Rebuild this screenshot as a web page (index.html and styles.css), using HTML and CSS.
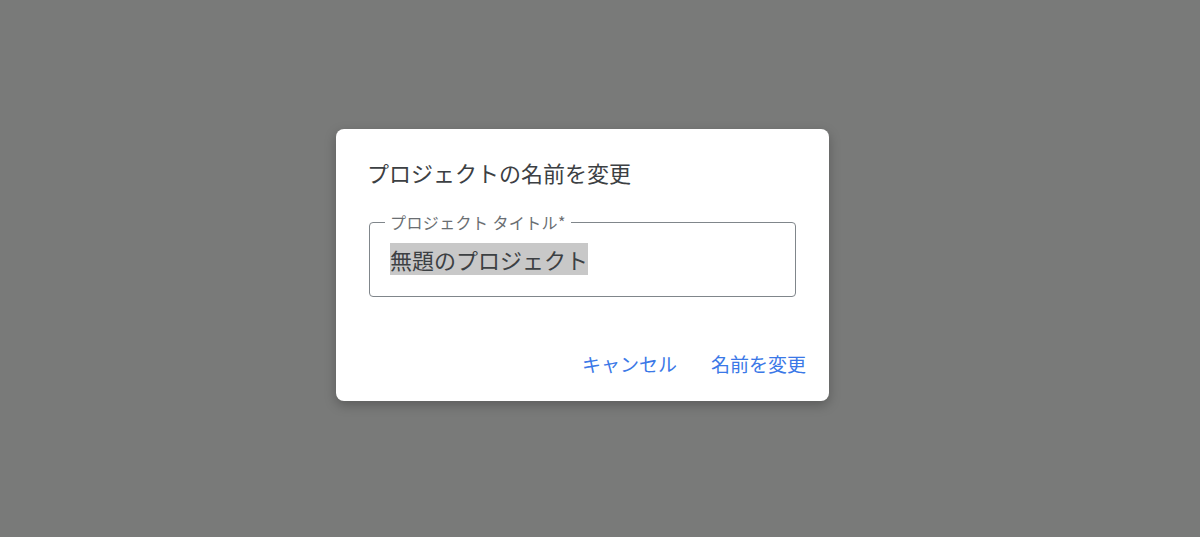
FILE: index.html
```html
<!DOCTYPE html>
<html lang="ja">
  <head>
    <meta charset="UTF-8" />
    <meta name="viewport" content="width=device-width, initial-scale=1.0" />
    <title>プロジェクトの名前を変更</title>
    <link rel="stylesheet" href="styles.css">
  </head>
  <body>
    <div class="overlay">
      <div class="dialog">
        <h2 class="dialog-title">プロジェクトの名前を変更</h2>

        <!-- Title field -->
        <fieldset class="field">
          <legend>プロジェクト タイトル*</legend>
          <div class="field-value"><span class="selected">無題のプロジェクト</span></div>
        </fieldset>

        <div class="dialog-actions">
          <button class="text-btn">キャンセル</button>
          <button class="text-btn">名前を変更</button>
        </div>
      </div>
    </div>
  </body>
</html>
```

FILE: styles.css
```css
html,
body {
  margin: 0;
  height: 100%;
}

body {
  font-family: "Noto Sans CJK JP", "Noto Sans", sans-serif;
  background-color: #797a79;
}

.overlay {
  height: 100%;
  display: flex;
  padding: 129px 0 0 336px;
  box-sizing: border-box;
}

.dialog {
  width: 493px;
  height: 272px;
  box-sizing: border-box;
  background: #fff;
  border-radius: 8px;
  box-shadow: 0 4px 12px rgba(0, 0, 0, 0.25);
  padding: 27px 32px 0 32px;
  display: flex;
  flex-direction: column;
}

.dialog-title {
  margin: 0 0 0 -1px;
  font-size: 22px;
  font-weight: normal;
  line-height: 32px;
  color: #3c4043;
}

.field {
  margin: 26px 1px 0 1px;
  padding: 0 20px;
  border: 1px solid #80868b;
  border-radius: 4px;
  height: 83px;
  box-sizing: border-box;
}

.field legend {
  padding: 0 5px;
  margin-left: -5px;
  font-size: 16px;
  line-height: 16px;
  letter-spacing: 0.4px;
  color: #6a6e72;
}

.field-value {
  margin-top: 13px;
  font-size: 22px;
  line-height: 33px;
  color: #3c4043;
}

.selected {
  background: #c8c8c8;
}

.dialog-actions {
  display: flex;
  justify-content: flex-end;
  gap: 18px;
  margin-top: auto;
  margin-right: -17px;
  padding-bottom: 19px;
}

.text-btn {
  font-family: inherit;
  font-size: 19px;
  line-height: 36px;
  color: #3b78e7;
  background: none;
  border: none;
  padding: 0 8px;
  cursor: pointer;
}
```
